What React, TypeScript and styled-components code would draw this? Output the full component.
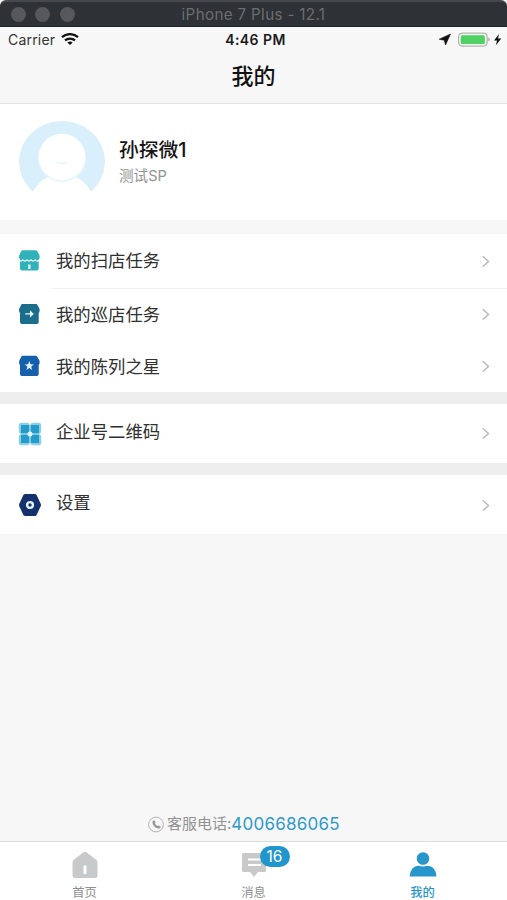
import React from "react";
import styled, { createGlobalStyle } from "styled-components";

const GlobalStyle = createGlobalStyle`
  * { box-sizing: border-box; }
  body {
    margin: 0;
    background: #f7f7f7;
    font-family: Inter, "Noto Sans CJK SC", sans-serif;
    color: #333;
  }
  svg { display: block; flex: none; }
`;

const Screen = styled.div`
  width: 507px;
  height: 900px;
  display: flex;
  flex-direction: column;
  overflow: hidden;
  background: #f7f7f7;
`;

const WindowBar = styled.header`
  flex: none;
  height: 27px;
  display: grid;
  grid-template-columns: 82px 1fr 82px;
  align-items: center;
  background: #2e3135;
  border-top: 2px solid #45484c;
  border-bottom: 1px solid #202225;
  border-radius: 6px 6px 0 0;
`;

const Lights = styled.div`
  display: flex;
  gap: 9.5px;
  padding-left: 10.5px;
`;

const Light = styled.span`
  width: 15px;
  height: 15px;
  border-radius: 50%;
  background: #57585b;
`;

const WindowTitle = styled.div`
  text-align: center;
  font-size: 15.2px;
  line-height: 24px;
  letter-spacing: 0.34px;
  color: #6b6e71;
  padding-top: 1px;
`;

const StatusBar = styled.div`
  flex: none;
  height: 25px;
  display: grid;
  grid-template-columns: 1fr auto 1fr;
  align-items: center;
  padding: 0 4px 0 8px;
  color: #333;
  font-size: 14px;
`;

const StatusSide = styled.div<{ $end?: boolean }>`
  display: flex;
  align-items: center;
  gap: ${(p) => (p.$end ? 0 : 6)}px;
  justify-content: ${(p) => (p.$end ? "flex-end" : "flex-start")};
  letter-spacing: 0.2px;
`;

const Clock = styled.div`
  font-weight: 600;
  font-size: 14px;
  letter-spacing: 0.45px;
  line-height: 20px;
  color: #1b1b1b;
`;

const NavBar = styled.div`
  flex: none;
  height: 52px;
  padding-top: 8px;
  text-align: center;
  font-size: 22px;
  line-height: 32px;
  font-weight: 500;
  color: #111;
  border-bottom: 1px solid #e3e3e3;
`;

const Profile = styled.section`
  flex: none;
  height: 116px;
  display: flex;
  padding: 16px 0 0 18px;
  gap: 13px;
  background: #fff;
`;

const ProfileText = styled.div`
  padding-top: 16px;
`;

const Name = styled.div`
  font-size: 19.8px;
  line-height: 28px;
  font-weight: 500;
  color: #151515;
`;

const Role = styled.div`
  font-size: 14.6px;
  line-height: 24px;
  color: #929292;
`;

const Gap = styled.div<{ $size: number; $light?: boolean }>`
  flex: none;
  height: ${(p) => p.$size}px;
  background: ${(p) => (p.$light ? "#f7f7f7" : "#eeeeee")};
`;

const Row = styled.div<{ $height: number; $shift?: number }>`
  flex: none;
  height: ${(p) => p.$height}px;
  display: grid;
  grid-template-columns: 38px 1fr 8px;
  align-items: center;
  padding: ${(p) => p.$shift ?? 0}px 17px 0 18px;
  background: #fff;
`;

const RowLabel = styled.div<{ $raise?: number; $lower?: number }>`
  font-size: 17.35px;
  line-height: 24px;
  color: #303030;
  padding-top: ${(p) => p.$lower ?? 0}px;
  padding-bottom: ${(p) => p.$raise ?? 0}px;
`;

const Divider = styled.div`
  flex: none;
  height: 1px;
  background: linear-gradient(to right, #fff 52px, #f1f1f1 52px);
`;

const Filler = styled.div`
  flex: 1;
`;

const Hotline = styled.div`
  flex: none;
  height: 34px;
  display: flex;
  align-items: center;
  padding: 0 0 0 148px;
`;

const HotlineLabel = styled.span`
  margin-left: 2px;
  font-size: 15px;
  line-height: 24px;
  color: #929292;
`;

const Phone = styled.span`
  font-size: 17px;
  line-height: 24px;
  letter-spacing: 0.24px;
  color: #2d99cd;
`;

const TabBar = styled.nav`
  flex: none;
  height: 59px;
  display: grid;
  grid-template-columns: repeat(3, 1fr);
  background: #fff;
  border-top: 1px solid #dadada;
`;

const Tab = styled.div<{ $active?: boolean }>`
  position: relative;
  display: flex;
  flex-direction: column;
  align-items: center;
  padding-top: 9px;
  font-size: 12.3px;
  line-height: 18px;
  font-weight: ${(p) => (p.$active ? 500 : 400)};
  color: ${(p) => (p.$active ? "#2797cb" : "#8f8f8f")};
`;

const TabIcon = styled.div`
  height: 33px;
`;

const Badge = styled.span`
  position: absolute;
  top: 4px;
  left: calc(50% + 6px);
  width: 30px;
  height: 21px;
  border-radius: 11px;
  background: #2196cc;
  color: #fff;
  font-size: 15.5px;
  line-height: 21px;
  text-align: center;
`;

const Wifi = () => (
  <svg width="18" height="13" viewBox="0 0.5 18 13" fill="none" stroke="#111" strokeWidth="2.3">
    <path d="M1 4.7C5.5.6 12.5.6 17 4.7" />
    <path d="M4 7.9c2.8-2.5 7.2-2.5 10 0" />
    <path d="M6.4 10c1.5-1.3 3.7-1.3 5.2 0L9 12.6z" fill="#111" stroke="none" />
  </svg>
);

const StatusIcons = () => (
  <svg width="64" height="18" viewBox="439 30.5 64 18">
    <path d="M450.5 33.5l-5 11-1.2-4.8-5.1-1z" fill="#111" stroke="#111" strokeWidth=".6" strokeLinejoin="round" />
    <rect x="458.6" y="32.6" width="28.6" height="13" rx="3.2" fill="#eef4ee" stroke="#a5aaa6" />
    <rect x="460.8" y="34.7" width="24" height="8.9" rx="1.5" fill="#51d063" />
    <path d="M488.4 37.2q2.6 1.7 0 3.8z" fill="#999" />
    <path d="M499 33.5l-5 6.6h3l-1.1 4.7 5.4-6.8h-3.3z" fill="#111" />
  </svg>
);

const Avatar = () => (
  <svg width="88" height="76" viewBox="18 120 88 76">
    <path
      d="M33 191.500A43 40.500 0 1 1 91 191.500C87 184.500 82 180 76 177Q62 186 48 177C42 180 37 184.500 33 191.500Z"
      fill="#d9effb"
    />
    <circle cx="62" cy="158" r="24" fill="#e8f6fd" />
    <circle cx="62" cy="157" r="23.2" fill="#fff" />
    <path d="M57 162.500q5 2.800 9.500 0" fill="none" stroke="#e3ecf1" strokeWidth="1" strokeLinecap="round" />
  </svg>
);

const Chevron = () => (
  <svg width="8" height="13" viewBox="0 0 8 13" fill="none" stroke="#b7b7b7" strokeWidth="1.4">
    <path d="M.8 1.2l5.7 5.2L.8 11.6" />
  </svg>
);

const shopBody =
  "M4.8.7h12.8q1 0 1.5.8l1.9 3.2q.6.9.6 1.9v1.400q0 1.200-.9 1.900v9q0 2-2 2H4q-2 0-2-2v-9q-.9-.7-.9-1.900V6.600q0-1 .6-1.900l1.700-3.200q.4-.8 1.400-.8z";

const ScanShop = () => (
  <svg width="22" height="22" viewBox="0 0.5 22 22">
    <path d={shopBody} fill="#31b1b9" />
    <path
      d="M1 10.400q1.800 2.200 3.800 0 2 2.200 4.100 0 2.100 2.200 4.200 0 2.100 2.200 4.100 0 2 2.200 4.500 0"
      fill="none"
      stroke="#effcfc"
      strokeWidth="1.3"
    />
    <path d="M10.200 15h2.300v4.500h-2.300z" fill="#e8fafa" />
  </svg>
);

const PatrolShop = () => (
  <svg width="22" height="22" viewBox="0 1 22 22">
    <path d={shopBody} fill="#1b6e8b" />
    <path d="M7.300 10.300h4.700V7.200l3.800 3.700-3.800 3.700v-3H7.300z" fill="#e7fbff" />
  </svg>
);

const StarShop = () => (
  <svg width="22" height="22" viewBox="0 0 22 22">
    <path d={shopBody} fill="#1460ad" />
    <path d="M11.300 6l1.200 3.300 3.500.1-2.800 2.200 1 3.400-2.900-2-2.900 2 1-3.400-2.800-2.200 3.500-.1z" fill="#e3f4ff" />
  </svg>
);

const QrCode = () => (
  <svg width="24" height="24" viewBox="0 0 24 24">
    <g fill="#8acfe8">
      <rect x=".8" y=".8" width="10.9" height="10.9" rx="2.8" />
      <rect x="12.3" y=".8" width="10.9" height="10.9" rx="2.8" />
      <rect x=".8" y="12.3" width="10.9" height="10.9" rx="2.8" />
      <rect x="12.3" y="12.3" width="10.9" height="10.9" rx="2.8" />
    </g>
    <g fill="#249bc8">
      <rect x="3" y="3" width="8.3" height="8.3" />
      <rect x="12.7" y="3" width="8.3" height="8.3" />
      <rect x="3" y="12.7" width="8.3" height="8.3" />
      <rect x="12.7" y="12.7" width="8.3" height="8.3" />
    </g>
    <circle cx="12" cy="12" r="2.5" fill="#dff6fd" />
  </svg>
);

const Settings = () => (
  <svg width="24" height="24" viewBox="0 0 24 24">
    <path
      d="M7.200 1h9.600q1.200 0 1.800 1l4.100 8.800q.5 1.200 0 2.400L18.600 22q-.6 1-1.800 1H7.200q-1.200 0-1.800-1L1.300 13.200q-.5-1.200 0-2.400L5.400 2q.6-1 1.800-1z"
      fill="#14316d"
    />
    <circle cx="12" cy="12" r="2.9" fill="#14316d" stroke="#e2f2fc" strokeWidth="2.4" />
  </svg>
);

const CallIcon = () => (
  <svg width="17" height="17" viewBox="0 0 17 17">
    <circle cx="8" cy="8.5" r="7.4" fill="none" stroke="#b4b4b4" strokeWidth="1" />
    <path
      d="M4.500 5.500l1.500-1.600 1.700 2.400-.8 1q.8 1.900 2.800 2.800l1-.7 2.200 1.600-1.500 1.500C7.800 12.900 4 9 4.500 5.500z"
      fill="#999"
    />
  </svg>
);

const HomeIcon = () => (
  <svg width="28" height="29" viewBox="0 0 28 29">
    <path
      d="M12.500 1.200q1.500-1 3 0l9.700 7.500q1.300 1 1.300 2.700v13.400q0 2.200-2.200 2.200H3.700q-2.200 0-2.200-2.200V11.400q0-1.700 1.300-2.700z"
      fill="#c7caca"
    />
    <path d="M12.500 14.500h3v8.500h-3z" fill="#fff" />
  </svg>
);

const MessageIcon = () => (
  <svg width="26" height="29" viewBox="0 0 26 29">
    <path
      d="M2.500 2h21q1.500 0 1.500 1.500v16q0 1.500-1.500 1.500h-6.500L13 26l-4-5H2.500Q1 21 1 19.500v-16Q1 2 2.500 2z"
      fill="#c9c9c9"
    />
    <path d="M7 8.500h13M7 14h13" stroke="#fff" strokeWidth="2" />
  </svg>
);

const MineIcon = () => (
  <svg width="28" height="29" viewBox="0 0 28 29">
    <circle cx="14" cy="7.5" r="6.3" fill="#2797cb" />
    <path d="M.8 25.500c0-6 3.700-10.700 9-10.700q4.200 1.500 8.500 0c5.400 0 9.100 4.700 9.100 10.700z" fill="#2797cb" />
  </svg>
);

export default function App() {
  return (
    <Screen>
      <GlobalStyle />
      <WindowBar>
        <Lights>
          <Light />
          <Light />
          <Light />
        </Lights>
        <WindowTitle>iPhone 7 Plus - 12.1</WindowTitle>
      </WindowBar>
      <StatusBar>
        <StatusSide>
          <span>Carrier</span>
          <Wifi />
        </StatusSide>
        <Clock>4:46 PM</Clock>
        <StatusSide $end>
          <StatusIcons />
        </StatusSide>
      </StatusBar>
      <NavBar>我的</NavBar>
      <Profile>
        <Avatar />
        <ProfileText>
          <Name>孙探微1</Name>
          <Role>测试SP</Role>
        </ProfileText>
      </Profile>
      <Gap $size={14} $light />
      <Row $height={54}>
        <ScanShop />
        <RowLabel $raise={1}>我的扫店任务</RowLabel>
        <Chevron />
      </Row>
      <Divider />
      <Row $height={51}>
        <PatrolShop />
        <RowLabel $lower={1}>我的巡店任务</RowLabel>
        <Chevron />
      </Row>
      <Row $height={52}>
        <StarShop />
        <RowLabel $lower={2}>我的陈列之星</RowLabel>
        <Chevron />
      </Row>
      <Gap $size={12} />
      <Row $height={59}>
        <QrCode />
        <RowLabel $raise={3}>企业号二维码</RowLabel>
        <Chevron />
      </Row>
      <Gap $size={12} />
      <Row $height={59} $shift={1}>
        <Settings />
        <RowLabel $raise={5}>设置</RowLabel>
        <Chevron />
      </Row>
      <Filler />
      <Hotline>
        <CallIcon />
        <HotlineLabel>客服电话:</HotlineLabel>
        <Phone>4006686065</Phone>
      </Hotline>
      <TabBar>
        <Tab>
          <TabIcon>
            <HomeIcon />
          </TabIcon>
          首页
        </Tab>
        <Tab>
          <TabIcon>
            <MessageIcon />
          </TabIcon>
          <Badge>16</Badge>
          消息
        </Tab>
        <Tab $active>
          <TabIcon>
            <MineIcon />
          </TabIcon>
          我的
        </Tab>
      </TabBar>
    </Screen>
  );
}
